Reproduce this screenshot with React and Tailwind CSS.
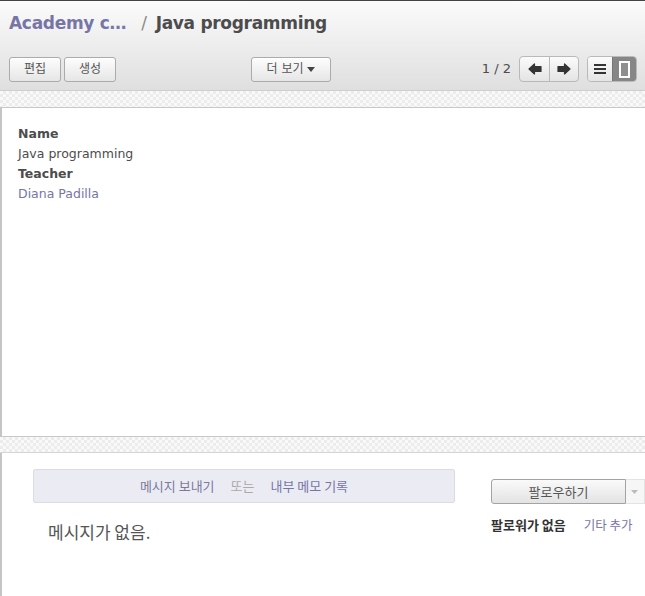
import React from "react";

const font = { fontFamily: '"DejaVu Sans", "Noto Sans CJK KR", sans-serif' };
const kr = { fontFamily: '"Noto Sans CJK KR", sans-serif' };

function Btn({ children, className = "" }) {
  return (
    <div
      className={
        "h-[25px] flex items-center justify-center rounded-[3px] border border-[#ababab] bg-gradient-to-b from-[#fdfdfd] to-[#e6e6e6] text-[12px] text-[#555] shadow-[inset_0_1px_0_#fff] " +
        className
      }
    >
      {children}
    </div>
  );
}

function Checker({ className = "" }) {
  return (
    <div
      className={
        "h-[16px] bg-[repeating-conic-gradient(#ececec_0_25%,#f9f9f9_0_50%)] bg-[length:6px_6px] " +
        className
      }
    />
  );
}

export default function App() {
  return (
    <div className="w-[645px] h-[596px] overflow-hidden bg-white flex flex-col" style={font}>
      {/* Header */}
      <div className="h-[91px] shrink-0 border-t border-[#444] border-b border-b-[#cfcfcf] bg-gradient-to-b from-[#fbfbfb] to-[#dfdfdf] px-[9px] flex flex-col">
        <div className="h-[46px] flex items-center text-[17px] font-bold tracking-[-0.3px]">
          <span className="text-[#7775a7]">Academy c…</span>
          <span className="text-[#8a8a8a] ml-[15px] mr-[9px] font-normal">/</span>
          <span className="text-[#4c4c4c]">Java programming</span>
        </div>
        <div className="mt-[9px] flex items-center">
          <Btn className="w-[52px]">편집</Btn>
          <Btn className="w-[52px] ml-[3px]">생성</Btn>
          <Btn className="w-[80px] ml-[135px] gap-[4px]">
            <span>더 보기</span>
            <svg width="8" height="5" viewBox="0 0 8 5"><path d="M0 0h8L4 5z" fill="#444" /></svg>
          </Btn>
          <div className="ml-auto flex items-center mr-[-1px]">
            <span className="text-[13px] text-[#4c4c4c] mr-[8px]">1 / 2</span>
            <div className="flex h-[26px] w-[60px] rounded-[4px] border border-[#b9b9b9] bg-gradient-to-b from-[#fbfbfb] to-[#e4e4e4]">
              <div className="w-[30px] flex items-center justify-center border-r border-[#b9b9b9]">
                <svg width="14" height="12" viewBox="0 0 14 12">
                  <path d="M1 6L6.5 1V3.5H13V8.5H6.5V11Z" fill="#333" stroke="#333" strokeWidth="1.2" strokeLinejoin="round" />
                </svg>
              </div>
              <div className="flex-1 flex items-center justify-center">
                <svg width="14" height="12" viewBox="0 0 14 12">
                  <path d="M13 6L7.5 1V3.5H1V8.5H7.5V11Z" fill="#333" stroke="#333" strokeWidth="1.2" strokeLinejoin="round" />
                </svg>
              </div>
            </div>
            <div className="ml-[8px] flex h-[26px] w-[50px] rounded-[4px] border border-[#b9b9b9] overflow-hidden">
              <div className="w-[24px] flex items-center justify-center bg-gradient-to-b from-[#fbfbfb] to-[#e4e4e4]">
                <svg width="12" height="10" viewBox="0 0 12 10"><path d="M0 0h12v2H0zM0 4h12v2H0zM0 8h12v2H0z" fill="#333" /></svg>
              </div>
              <div className="flex-1 flex items-center justify-center bg-[#868686] border-l border-[#777]">
                <div className="w-[11px] h-[17px] border-2 border-white bg-[#8f8f8f]" />
              </div>
            </div>
          </div>
        </div>
      </div>

      <Checker />

      {/* Sheet */}
      <div className="h-[330px] shrink-0 border-y border-[#c8c8c8] border-l-2 border-l-[#c5c5c5] bg-white px-[16px] pt-[16px] text-[12.5px] leading-[20px] text-[#4c4c4c]">
        <div className="font-bold">Name</div>
        <div>Java programming</div>
        <div className="font-bold">Teacher</div>
        <div className="text-[#7775a7]">Diana Padilla</div>
      </div>

      <Checker className="border-b border-[#d5d5d5]" />

      {/* Chatter */}
      <div className="flex-1 border-l-2 border-[#c5c5c5] flex pl-[31px]" style={kr}>
        <div className="w-[422px] pt-[16px]">
          <div className="h-[34px] rounded-[2px] border border-[#dcdce4] bg-[#ebebf3] flex items-center justify-center text-[13px]">
            <span className="text-[#7b7a9c]">메시지 보내기</span>
            <span className="text-[#aaa] ml-[16px]">또는</span>
            <span className="text-[#7775a7] ml-[16px]">내부 메모 기록</span>
          </div>
          <div className="mt-[16px] pl-[15px] text-[17px] text-[#555]">
            메시지가 없음.
          </div>
        </div>
        <div className="ml-[36px] pt-[26px] flex-1">
          <div className="flex h-[25px]">
            <div className="w-[135px] rounded-l-[3px] border border-[#a3a3a3] bg-gradient-to-b from-[#fafafa] to-[#e3e3e3] flex items-center justify-center text-[13px] text-[#555]">
              팔로우하기
            </div>
            <div className="flex-1 border border-l-0 border-[#e3e3e3] bg-[#f6f6f6] flex items-center justify-center pr-[2px]">
              <svg width="7" height="4" viewBox="0 0 7 4"><path d="M0 0h7L3.5 4z" fill="#bbb" /></svg>
            </div>
          </div>
          <div className="mt-[11px] flex items-baseline whitespace-nowrap">
            <span className="text-[13px] font-bold text-[#333]">팔로워가 없음</span>
            <span className="ml-[18px] text-[12.5px] text-[#7775a7]">기타 추가</span>
          </div>
        </div>
      </div>
    </div>
  );
}
